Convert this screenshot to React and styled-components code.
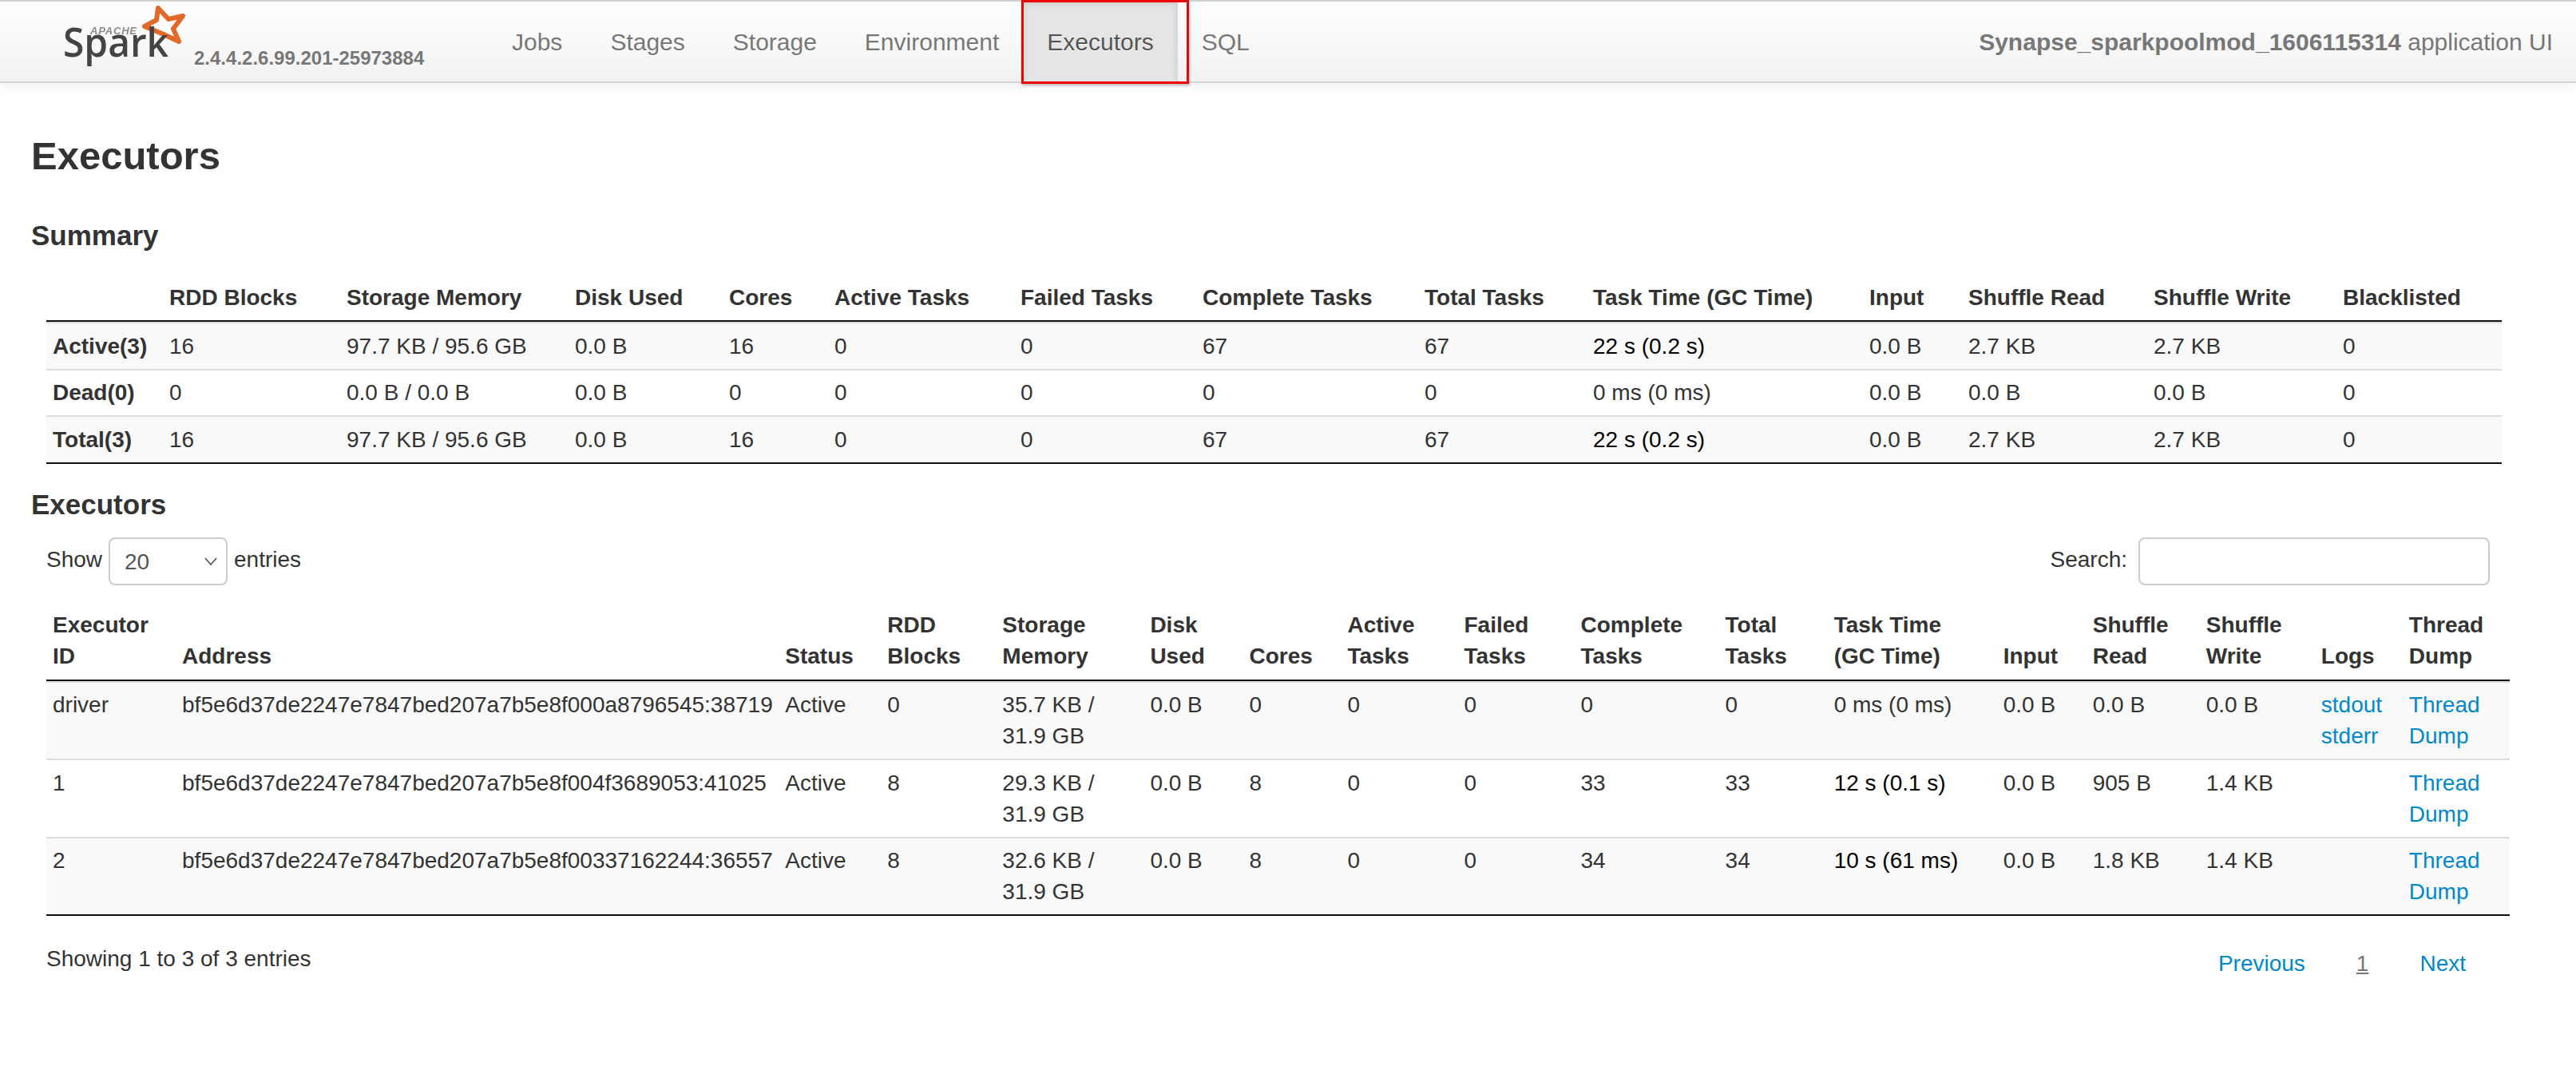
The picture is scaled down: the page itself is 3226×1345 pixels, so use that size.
import React from "react";
import styled, { createGlobalStyle } from "styled-components";

const Global = createGlobalStyle`
  html, body { margin: 0; padding: 0; background: #fff; }
  body { font-family: "Liberation Sans", Arial, sans-serif; font-size: 28px; line-height: 39px; color: #333; }
`;

const Navbar = styled.header`
  position: relative;
  display: flex;
  align-items: stretch;
  box-sizing: border-box;
  height: 104px;
  padding-left: 70px;
  border-top: 2px solid #d0d0d0;
  border-bottom: 2px solid #d6d6d6;
  background: linear-gradient(to bottom, #ffffff, #f2f2f2);
  box-shadow: 0 3px 12px rgba(0, 0, 0, 0.07);
`;
const LogoArt = styled.svg`
  flex: none;
  width: 173px;
  height: 100px;
  margin-top: -2px;
  filter: blur(0.6px);
`;
const Version = styled.span`
  align-self: flex-end;
  width: 368px;
  margin-bottom: 10px;
  font-size: 24px;
  line-height: 39px;
  font-weight: 700;
  color: #777;
  text-shadow: 0 1px 0 #fff;
`;
const NavList = styled.nav`
  display: flex;
  flex: 1;
`;
const NavItem = styled.a`
  position: relative;
  display: flex;
  align-items: center;
  padding: 0 30px;
  margin-top: -2px;
  margin-bottom: -2px;
  font-size: 30px;
  color: ${(p) => (p.$active ? "#555" : "#777")};
  background: ${(p) => (p.$active ? "#e5e5e5" : "transparent")};
  box-shadow: ${(p) => (p.$active ? "inset 0 4px 10px rgba(0,0,0,.14)" : "none")};
  text-shadow: 0 1px 0 #fff;
`;
const RedMark = styled.span`
  position: absolute;
  top: 0;
  bottom: -1px;
  left: -2px;
  right: -14px;
  border: 3px solid #f00000;
  box-shadow: 1px 2px 3px rgba(0, 0, 0, 0.25);
  pointer-events: none;
`;
const AppName = styled.p`
  display: flex;
  align-items: center;
  gap: 0.28em;
  margin: 0 29px 0 0;
  font-size: 30px;
  color: #777;
  text-shadow: 0 1px 0 #fff;
  white-space: nowrap;
`;
const Strong = styled.strong`
  font-weight: 700;
`;
const Main = styled.main`
  padding: 65px 39px 80px;
`;
const Title = styled.h3`
  margin: 0;
  font-size: 49px;
  line-height: 52px;
  font-weight: 700;
  color: #333;
`;
const SectionTitle = styled.h4`
  margin: ${(p) => p.$top}px 0 0;
  font-size: 35px;
  line-height: 38px;
  font-weight: 700;
  color: #333;
`;
const Indented = styled.div`
  width: ${(p) => p.$width}px;
  margin-top: ${(p) => p.$top}px;
  margin-left: 19px;
`;
const Table = styled.table`
  width: 100%;
  table-layout: fixed;
  border-collapse: separate;
  border-spacing: 0;
  border-bottom: 2px solid #111;
`;
const Col = styled.col`
  width: ${(p) => p.$w}px;
`;
const Th = styled.th`
  padding: ${(p) => (p.$low ? "11px 8px 9px" : "10px 8px")};
  text-align: left;
  vertical-align: bottom;
  font-weight: 700;
  color: #333;
  border-bottom: 2px solid #111;
  overflow: visible;
`;
const Row = styled.tr`
  background: ${(p) => (p.$odd ? "#f9f9f9" : "#fff")};
`;
const Td = styled.td`
  padding: 8.75px 8px;
  text-align: left;
  vertical-align: top;
  white-space: nowrap;
  overflow: visible;
  font-weight: ${(p) => (p.$bold ? 700 : 400)};
  color: ${(p) => (p.$hot ? "#000" : "#333")};
  border-top: 2px solid #ddd;
`;
const Link = styled.a`
  display: block;
  color: #0088cc;
  white-space: normal;
`;
const Controls = styled.div`
  display: flex;
  justify-content: space-between;
  align-items: center;
  width: 3060px;
  height: 60px;
`;
const Field = styled.label`
  display: flex;
  align-items: center;
  gap: 8px;
  margin-top: -4px;
`;
const SelectBox = styled.span`
  position: relative;
  display: block;
  box-sizing: border-box;
  width: 149px;
  height: 60px;
  margin-top: 4px;
  padding: 9px 18px;
  border: 2px solid #ccc;
  border-radius: 8px;
  color: #555;
  background: #fff;
`;
const Chevron = styled.svg`
  position: absolute;
  top: 21px;
  right: 10px;
  width: 18px;
  height: 14px;
`;
const SearchField = styled.span`
  display: block;
  box-sizing: border-box;
  width: 440px;
  height: 60px;
  margin-top: 4px;
  margin-left: 6px;
  border: 2px solid #ccc;
  border-radius: 8px;
  background: #fff;
`;
const Footer = styled.div`
  display: flex;
  justify-content: space-between;
  align-items: flex-start;
  margin-top: 34px;
`;
const Pager = styled.div`
  display: flex;
  margin-top: 6px;
  margin-right: 23px;
`;
const PageLink = styled.a`
  padding: 0 32px;
  color: ${(p) => (p.$current ? "#777" : "#0088cc")};
  text-decoration: ${(p) => (p.$current ? "underline" : "none")};
`;

const summaryWidths = [146, 222, 286, 193, 132, 233, 228, 278, 211, 346, 124, 232, 237, 207];
const summaryHead = ["", "RDD Blocks", "Storage Memory", "Disk Used", "Cores", "Active Tasks", "Failed Tasks", "Complete Tasks", "Total Tasks", "Task Time (GC Time)", "Input", "Shuffle Read", "Shuffle Write", "Blacklisted"];
const summaryRows = [
  ["Active(3)", "16", "97.7 KB / 95.6 GB", "0.0 B", "16", "0", "0", "67", "67", "22 s (0.2 s)", "0.0 B", "2.7 KB", "2.7 KB", "0"],
  ["Dead(0)", "0", "0.0 B / 0.0 B", "0.0 B", "0", "0", "0", "0", "0", "0 ms (0 ms)", "0.0 B", "0.0 B", "0.0 B", "0"],
  ["Total(3)", "16", "97.7 KB / 95.6 GB", "0.0 B", "16", "0", "0", "67", "67", "22 s (0.2 s)", "0.0 B", "2.7 KB", "2.7 KB", "0"],
];

const execWidths = [162, 755, 128, 144, 185, 124, 123, 146, 146, 181, 136, 212, 112, 142, 144, 110, 134];
const execHead = ["Executor ID", "Address", "Status", "RDD Blocks", "Storage Memory", "Disk Used", "Cores", "Active Tasks", "Failed Tasks", "Complete Tasks", "Total Tasks", "Task Time (GC\u00a0Time)", "Input", "Shuffle Read", "Shuffle Write", "Logs", "Thread Dump"];
const execRows = [
  { id: "driver", address: "bf5e6d37de2247e7847bed207a7b5e8f000a8796545:38719", rdd: "0", mem: "35.7 KB /", cores: "0", done: "0", time: "0 ms (0 ms)", hot: false, read: "0.0 B", write: "0.0 B", logs: true },
  { id: "1", address: "bf5e6d37de2247e7847bed207a7b5e8f004f3689053:41025", rdd: "8", mem: "29.3 KB /", cores: "8", done: "33", time: "12 s (0.1 s)", hot: true, read: "905 B", write: "1.4 KB", logs: false },
  { id: "2", address: "bf5e6d37de2247e7847bed207a7b5e8f00337162244:36557", rdd: "8", mem: "32.6 KB /", cores: "8", done: "34", time: "10 s (61 ms)", hot: true, read: "1.8 KB", write: "1.4 KB", logs: false },
];

function SparkLogo() {
  return (
    <LogoArt viewBox="0 0 173 100" aria-label="Apache Spark">
      <path
        d="M128 10 L141 24 L159 20 L147 36 L154 52 L135 43 L111 33 L126 25 Z"
        fill="#fff"
        stroke="#e2692a"
        strokeWidth="6"
        strokeLinejoin="round"
      />
      <text x="43" y="43" fontFamily="Liberation Sans, sans-serif" fontWeight="700" fontStyle="italic" fontSize="13" textLength="58" fill="#8a8a8a">APACHE</text>
      <text x="9" y="71" fontFamily="Open Sans, sans-serif" fontWeight="600" fontSize="50" textLength="132" lengthAdjust="spacingAndGlyphs" fill="#444">Spark</text>
    </LogoArt>
  );
}

export default function App() {
  return (
    <>
      <Global />
      <Navbar>
        <SparkLogo />
        <Version>2.4.4.2.6.99.201-25973884</Version>
        <NavList>
          <NavItem>Jobs</NavItem>
          <NavItem>Stages</NavItem>
          <NavItem>Storage</NavItem>
          <NavItem>Environment</NavItem>
          <NavItem $active>
            Executors
            <RedMark />
          </NavItem>
          <NavItem>SQL</NavItem>
        </NavList>
        <AppName>
          <Strong>Synapse_sparkpoolmod_1606115314</Strong>
          <span>application UI</span>
        </AppName>
      </Navbar>
      <Main>
        <Title>Executors</Title>
        <SectionTitle $top={55}>Summary</SectionTitle>
        <Indented $width={3075} $top={28}>
          <Table>
            <colgroup>
              {summaryWidths.map((w, i) => (
                <Col key={i} $w={w} />
              ))}
            </colgroup>
            <thead>
              <tr>
                {summaryHead.map((h, i) => (
                  <Th key={i} $low>{h}</Th>
                ))}
              </tr>
            </thead>
            <tbody>
              {summaryRows.map((row, r) => (
                <Row key={r} $odd={r % 2 === 0}>
                  {row.map((c, i) => (
                    <Td key={i} $bold={i === 0} $hot={i === 9 && r !== 1}>
                      {c}
                    </Td>
                  ))}
                </Row>
              ))}
            </tbody>
          </Table>
        </Indented>
        <SectionTitle $top={32}>Executors</SectionTitle>
        <Indented $width={3085} $top={22}>
          <Controls>
            <Field>
              Show
              <SelectBox>
                20
                <Chevron viewBox="0 0 18 14">
                  <path d="M2 3 L9 11 L16 3" fill="none" stroke="#555" strokeWidth="1.8" />
                </Chevron>
              </SelectBox>
              entries
            </Field>
            <Field>
              Search:
              <SearchField />
            </Field>
          </Controls>
        </Indented>
        <Indented $width={3085} $top={20}>
          <Table>
            <colgroup>
              {execWidths.map((w, i) => (
                <Col key={i} $w={w} />
              ))}
            </colgroup>
            <thead>
              <tr>
                {execHead.map((h, i) => (
                  <Th key={i}>{h}</Th>
                ))}
              </tr>
            </thead>
            <tbody>
              {execRows.map((e, r) => (
                <Row key={e.id} $odd={r % 2 === 0}>
                  <Td>{e.id}</Td>
                  <Td>{e.address}</Td>
                  <Td>Active</Td>
                  <Td>{e.rdd}</Td>
                  <Td>
                    {e.mem}
                    <br />
                    31.9 GB
                  </Td>
                  <Td>0.0 B</Td>
                  <Td>{e.cores}</Td>
                  <Td>0</Td>
                  <Td>0</Td>
                  <Td>{e.done}</Td>
                  <Td>{e.done}</Td>
                  <Td $hot={e.hot}>{e.time}</Td>
                  <Td>0.0 B</Td>
                  <Td>{e.read}</Td>
                  <Td>{e.write}</Td>
                  <Td>
                    {e.logs && (
                      <>
                        <Link>stdout</Link>
                        <Link>stderr</Link>
                      </>
                    )}
                  </Td>
                  <Td>
                    <Link>Thread</Link>
                    <Link>Dump</Link>
                  </Td>
                </Row>
              ))}
            </tbody>
          </Table>
          <Footer>
            <span>Showing 1 to 3 of 3 entries</span>
            <Pager>
              <PageLink>Previous</PageLink>
              <PageLink $current>1</PageLink>
              <PageLink>Next</PageLink>
            </Pager>
          </Footer>
        </Indented>
      </Main>
    </>
  );
}
